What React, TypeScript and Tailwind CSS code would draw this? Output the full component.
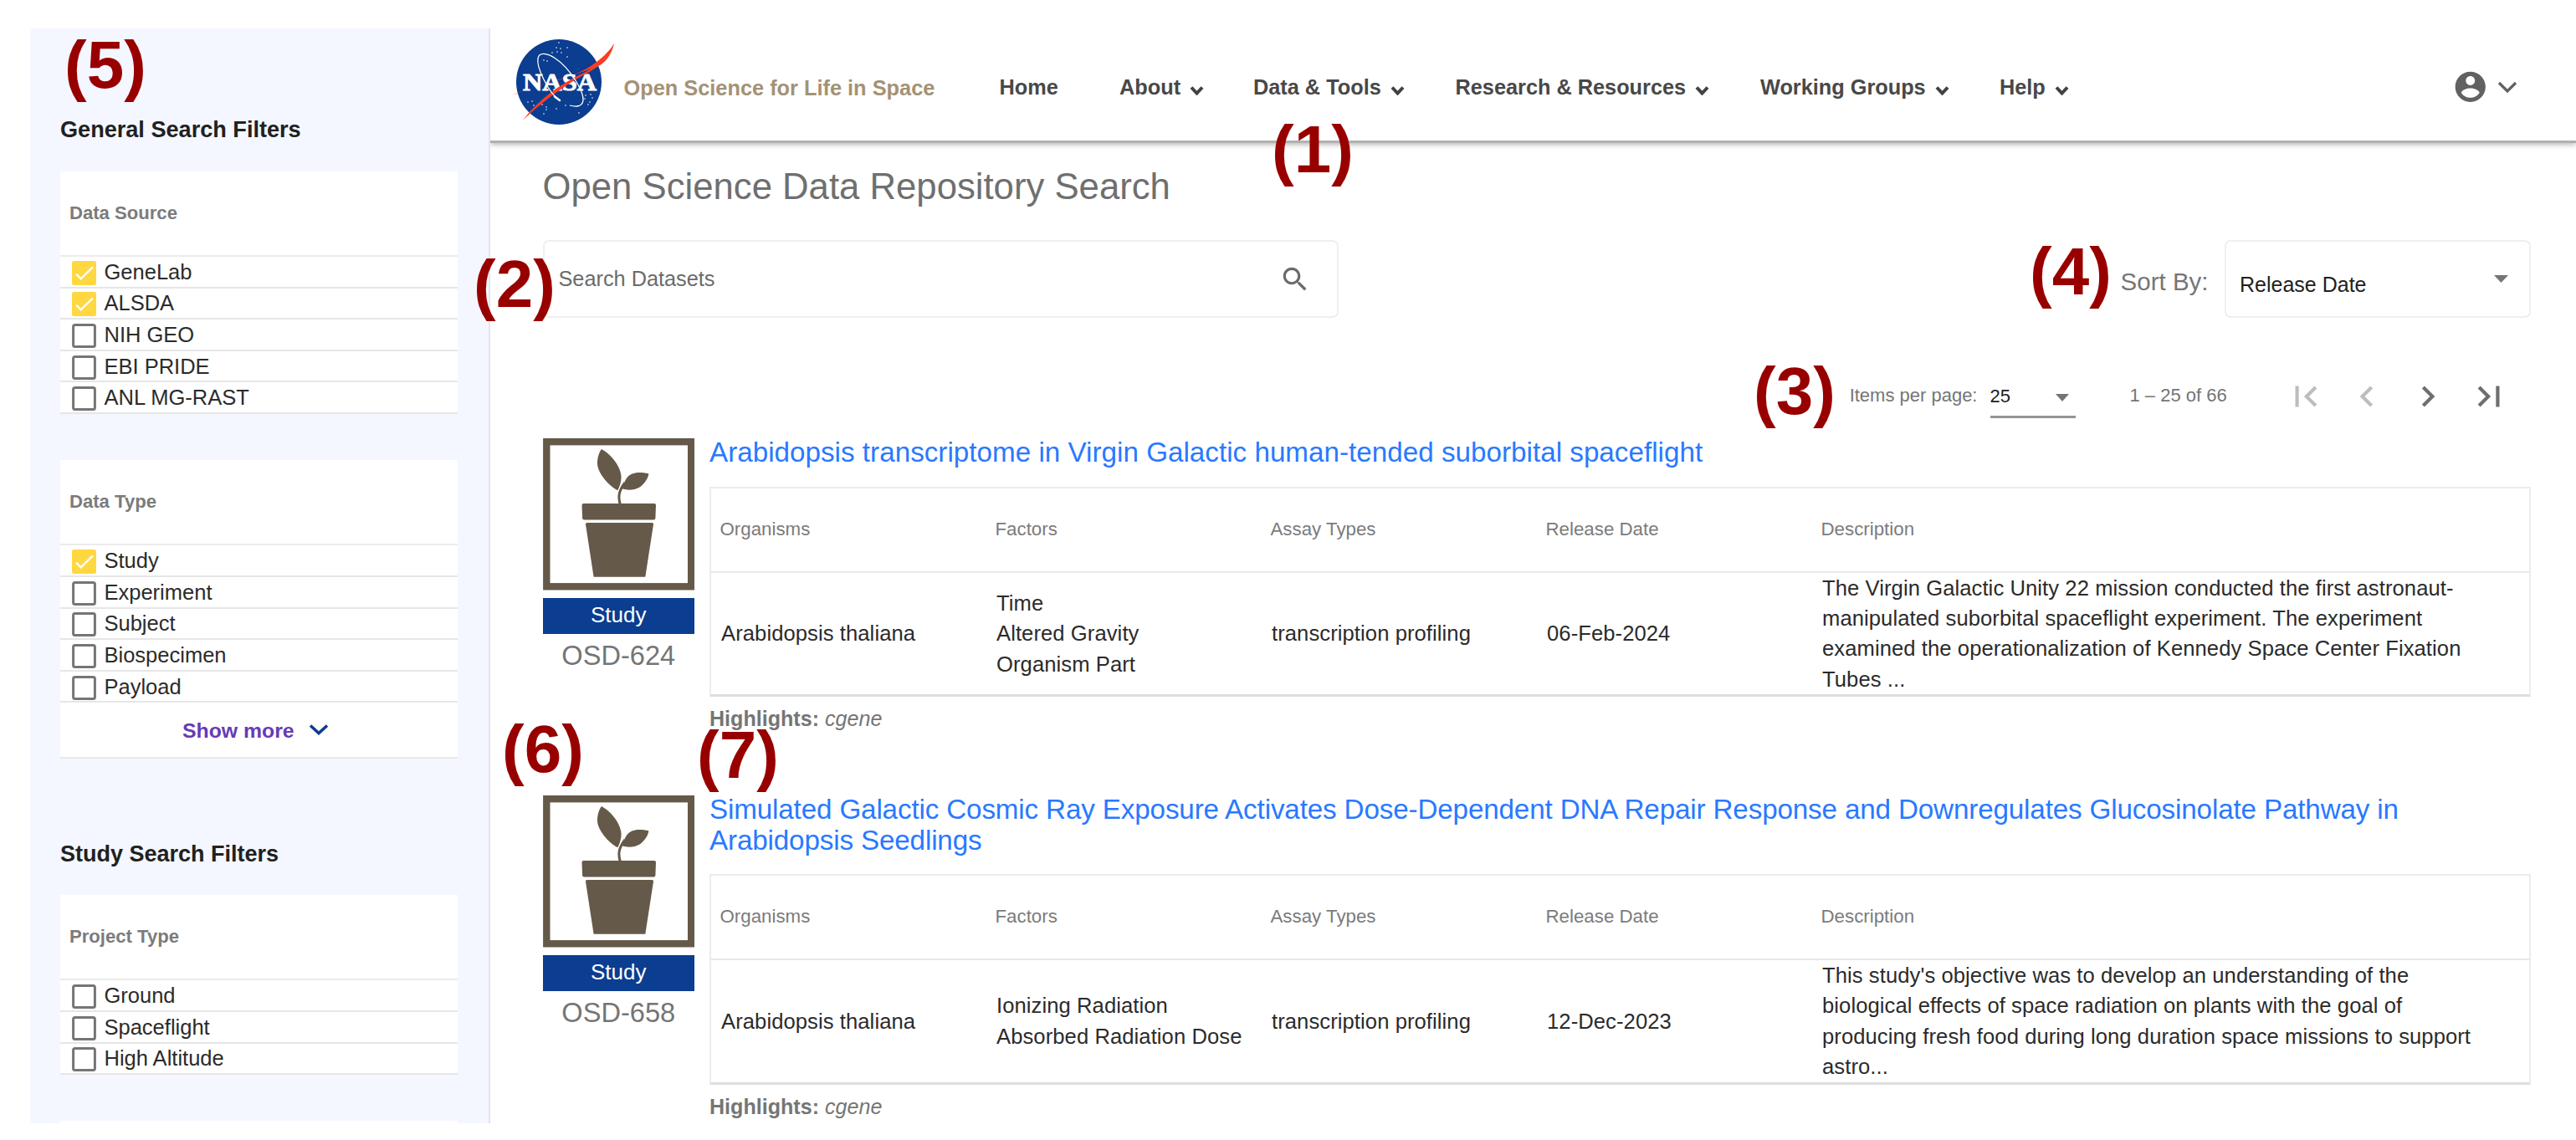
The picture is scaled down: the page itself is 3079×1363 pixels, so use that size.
import React from "react";

const CHEVRON_DOWN = "M2 2.5 L8.5 9.5 L15 2.5";

function NasaLogo() {
  const stars = [
    [68, 21], [65, 27], [70, 28], [78, 27], [71, 33], [66, 32], [60, 33], [78, 38], [50, 42], [54, 43],
    [31, 92], [36, 91], [38, 96], [48, 95], [53, 98], [50, 106], [53, 101], [65, 100], [76, 96],
    [100, 84], [108, 87], [106, 83], [103, 95], [105, 92], [92, 105], [50, 89], [99, 88],
  ];
  return (
    <svg width="138" height="134" viewBox="0 4 138 134" className="ml-[14px] shrink-0" aria-label="NASA">
      <circle cx="68" cy="68" r="51" fill="#0b3d91" />
      {stars.map(([x, y], i) => (
        <circle key={i} cx={x} cy={y} r="0.9" fill="#ffffff" opacity="0.65" />
      ))}
      <path
        d="M11 83.7 C40 72 84 64 106 49 C119 40 128 32 134 22 C131 36 122 48 110 51 C85 60 50 70 11 83.7Z"
        fill="#fc3d21"
      />
      <text
        x="25"
        y="78"
        textLength="88"
        lengthAdjust="spacingAndGlyphs"
        fill="#ffffff"
        stroke="#ffffff"
        strokeWidth="0.9"
        className="font-['Liberation_Serif',serif] text-[29px] font-bold"
      >
        NASA
      </text>
      <path
        d="M134 22 C127 44 112 52 97 60 C70 75 46 94 25 113.7 C42 91 68 71 98 57 C116 48 128 36 134 22Z"
        fill="#fc3d21"
      />
      <path
        d="M68.5 90 C55 80 41 50 43 40 C44 32 54 33 64 40 C82 52 98 80 97 90 C96 98 88 98 81 96"
        fill="none"
        stroke="#ffffff"
        strokeWidth="1.3"
      />
      <path d="M63 85.5 L69 90" stroke="#ffffff" strokeWidth="2.6" strokeLinecap="round" />
    </svg>
  );
}

function PlantIcon() {
  return (
    <svg width="181.5" height="181.5" viewBox="0 0 181.5 181.5" className="block" fill="#655949">
      <rect x="4.3" y="4.2" width="172.9" height="173.1" fill="#ffffff" stroke="#655949" strokeWidth="8.4" />
      <path d="M70 13 C83 20 94 36 93.6 47 C93.4 53 91.5 58 89.3 62.3 C77 56 65 40 65 30 C65 23 67 17 70 13Z" />
      <path d="M126.3 42.3 C114 39.5 105 41 100.5 47 C97.5 51 96.3 55 95 60.6 C103 63 112 61.5 117 57.5 C123 52 126 47 126.3 42.3Z" />
      <path d="M98 53 C90.5 63 89.5 70 92.3 79" fill="none" stroke="#655949" strokeWidth="3" />
      <path d="M48.5 78 H133 Q135 78 135 80 L134.4 95.5 Q134.3 97.5 132.3 97.5 H49.2 Q47.2 97.5 47.1 95.5 L46.5 80 Q46.5 78 48.5 78Z" />
      <path d="M52.5 101 H130.5 Q132.2 101 132 103 L122.3 165.7 H60.6 L51 103 Q50.8 101 52.5 101Z" />
    </svg>
  );
}

function Checkbox({ checked }: { checked?: boolean }) {
  return (
    <svg width="29" height="29" viewBox="0 0 29 29" className="mt-[3px] shrink-0">
      {checked ? (
        <>
          <rect width="29" height="29" rx="2.5" fill="#ffd740" />
          <path d="M5 15.5 L10.6 21.3 L25 7.3" fill="none" stroke="#ffffff" strokeWidth="2.4" />
        </>
      ) : (
        <rect x="1.6" y="1.6" width="25.8" height="25.8" rx="2" fill="#ffffff" stroke="#757575" strokeWidth="3" />
      )}
    </svg>
  );
}

type Option = { label: string; checked?: boolean };

function FilterCard({ title, options, more }: { title: string; options: Option[]; more?: boolean }) {
  return (
    <div className="w-[475px] bg-white">
      <div className="h-[102px] border-b-2 border-[#ebebeb] pl-[11px] text-[22.1px] leading-[100px] font-bold text-[#7b7b7b]">
        {title}
      </div>
      {options.map((o) => (
        <div
          key={o.label}
          className="flex h-[37.6px] items-center gap-[10px] border-b-2 border-[#e6e6e6] pl-[13.5px] text-[25.5px] leading-[30px] text-[#2b2b2b]"
        >
          <Checkbox checked={o.checked} />
          {o.label}
        </div>
      ))}
      {more && (
        <div className="flex h-[67px] items-center border-b-2 border-[#e9e9e9] pt-[1px] pl-[146px] text-[24.8px] font-bold text-[#673ab7]">
          Show more
          <svg width="24" height="16" viewBox="0 0 24 16" className="ml-[17px]">
            <path d="M2 2.5 L12 11.5 L22 2.5" fill="none" stroke="#0b3d91" strokeWidth="3.6" />
          </svg>
        </div>
      )}
    </div>
  );
}

function NavItem({ label, width, menu = true }: { label: string; width: string; menu?: boolean }) {
  return (
    <div className={`flex shrink-0 items-center text-[25.3px] leading-[30px] font-bold whitespace-nowrap text-[#484848] ${width}`}>
      {label}
      {menu && (
        <svg width="17" height="12" viewBox="0 0 17 12" className="mt-[9px] ml-[11px]">
          <path d={CHEVRON_DOWN} fill="none" stroke="#424242" strokeWidth="4" />
        </svg>
      )}
    </div>
  );
}

function PageButton({ d, disabled }: { d: string; disabled?: boolean }) {
  return (
    <svg width="50" height="50" viewBox="0 0 24 24" className="shrink-0" fill={disabled ? "#bdbdbd" : "#6e6e6e"}>
      <path d={d} />
    </svg>
  );
}

type Study = {
  id: string;
  title: string[];
  titleClass: string;
  factors: string[];
  date: string;
  description: string[];
};

function Lines({ lines }: { lines: string[] }) {
  return (
    <div>
      {lines.map((l) => (
        <div key={l} className="whitespace-nowrap">
          {l}
        </div>
      ))}
    </div>
  );
}

function Result({ study }: { study: Study }) {
  return (
    <div className="flex h-[427px] shrink-0 gap-[18px]">
      <div className="w-[181.5px] shrink-0 text-center">
        <PlantIcon />
        <div className="mt-[9px] h-[43px] bg-[#0b3d91] text-[26px] leading-[41px] text-white">Study</div>
        <div className="mt-[6px] text-[32.6px] leading-[40px] text-[#757575]">{study.id}</div>
      </div>
      <div className="-mt-[1px] flex-1">
        <h2 className={`text-[33.2px] leading-[36.5px] text-[#2979ff] ${study.titleClass}`}>
          <Lines lines={study.title} />
        </h2>
        <div className="mt-[22px] border-2 border-b-[3px] border-[#ececec] border-b-[#dedede]">
          <div className="grid h-[101px] grid-cols-[329px_329px_329px_329px_1fr] border-b-2 border-[#e8e8e8] pl-[10.5px] text-[22.3px] leading-[97px] text-[#7b7b7b]">
            <div>Organisms</div>
            <div>Factors</div>
            <div>Assay Types</div>
            <div>Release Date</div>
            <div>Description</div>
          </div>
          <div className="grid h-[145.6px] grid-cols-[329px_329px_329px_329px_1fr] items-center pl-[12px] text-[25.6px] leading-[36.4px] tracking-[0.08px] text-[#2b2b2b]">
            <div>Arabidopsis thaliana</div>
            <Lines lines={study.factors} />
            <div>transcription profiling</div>
            <div>{study.date}</div>
            <Lines lines={study.description} />
          </div>
        </div>
        <div className="mt-[8px] text-[25.1px] leading-[36px] text-[#757575]">
          <b>Highlights:</b> <i>cgene</i>
        </div>
      </div>
    </div>
  );
}

const STUDIES: Study[] = [
  {
    id: "OSD-624",
    title: ["Arabidopsis transcriptome in Virgin Galactic human-tended suborbital spaceflight"],
    titleClass: "tracking-[0.02px]",
    factors: ["Time", "Altered Gravity", "Organism Part"],
    date: "06-Feb-2024",
    description: [
      "The Virgin Galactic Unity 22 mission conducted the first astronaut-",
      "manipulated suborbital spaceflight experiment. The experiment",
      "examined the operationalization of Kennedy Space Center Fixation",
      "Tubes ...",
    ],
  },
  {
    id: "OSD-658",
    title: [
      "Simulated Galactic Cosmic Ray Exposure Activates Dose-Dependent DNA Repair Response and Downregulates Glucosinolate Pathway in",
      "Arabidopsis Seedlings",
    ],
    titleClass: "tracking-[-0.14px]",
    factors: ["Ionizing Radiation", "Absorbed Radiation Dose"],
    date: "12-Dec-2023",
    description: [
      "This study's objective was to develop an understanding of the",
      "biological effects of space radiation on plants with the goal of",
      "producing fresh food during long duration space missions to support",
      "astro...",
    ],
  },
];

const MARKERS = [
  { label: "(1)", place: "left-[1520px] top-[139px]" },
  { label: "(2)", place: "left-[566px] top-[300px]" },
  { label: "(3)", place: "left-[2096px] top-[428px]" },
  { label: "(4)", place: "left-[2426px] top-[285px]" },
  { label: "(5)", place: "left-[77px] top-[38px]" },
  { label: "(6)", place: "left-[600px] top-[856px]" },
  { label: "(7)", place: "left-[833px] top-[863px]" },
];

export default function App() {
  return (
    <div className="relative flex h-[1363px] w-[3079px] items-start overflow-hidden bg-white pt-[34px] pl-[36px] font-['Liberation_Sans',Arial,sans-serif]">
      <aside className="h-[1309px] w-[550px] shrink-0 overflow-hidden border-r-2 border-[#e2e5ee] bg-[#f4f7ff] pl-[36px]">
        <h3 className="h-[171px] pt-[104px] text-[27.1px] leading-[34px] font-bold text-[#212121]">General Search Filters</h3>
        <FilterCard
          title="Data Source"
          options={[
            { label: "GeneLab", checked: true },
            { label: "ALSDA", checked: true },
            { label: "NIH GEO" },
            { label: "EBI PRIDE" },
            { label: "ANL MG-RAST" },
          ]}
        />
        <div className="h-[55.5px]" />
        <FilterCard
          title="Data Type"
          more
          options={[
            { label: "Study", checked: true },
            { label: "Experiment" },
            { label: "Subject" },
            { label: "Biospecimen" },
            { label: "Payload" },
          ]}
        />
        <h3 className="h-[163px] pt-[97px] text-[27px] leading-[34px] font-bold text-[#212121]">Study Search Filters</h3>
        <FilterCard
          title="Project Type"
          options={[{ label: "Ground" }, { label: "Spaceflight" }, { label: "High Altitude" }]}
        />
        <div className="mt-[55px] h-[20px] w-[475px] bg-white" />
      </aside>

      <main className="flex h-[1309px] min-w-0 flex-1 flex-col overflow-hidden">
        <header className="flex h-[137px] shrink-0 items-center border-b-[3px] border-[#b1b1b1] shadow-[0_2px_6px_rgba(0,0,0,0.28)]">
          <NasaLogo />
          <div className="mt-[8px] ml-[7.5px] w-[449px] shrink-0 text-[25.35px] leading-[30px] font-bold whitespace-nowrap text-[#a39275]">
            Open Science for Life in Space
          </div>
          <div className="mt-[5px] flex flex-1 items-center">
            <NavItem label="Home" width="w-[143.5px]" menu={false} />
            <NavItem label="About" width="w-[160px]" />
            <NavItem label="Data & Tools" width="w-[241.5px]" />
            <NavItem label="Research & Resources" width="w-[364.5px]" />
            <NavItem label="Working Groups" width="w-[286px]" />
            <NavItem label="Help" width="w-[541px]" />
            <svg width="43.5" height="43.5" viewBox="0 0 24 24" className="shrink-0" fill="#616161">
              <path d="M12 2C6.48 2 2 6.48 2 12s4.48 10 10 10 10-4.48 10-10S17.52 2 12 2zm0 3c1.66 0 3 1.34 3 3s-1.34 3-3 3-3-1.34-3-3 1.34-3 3-3zm0 14.2c-2.5 0-4.71-1.28-6-3.22.03-1.99 4-3.08 6-3.08 1.99 0 5.97 1.09 6 3.08-1.29 1.94-3.5 3.22-6 3.22z" />
            </svg>
            <svg width="24" height="16" viewBox="0 0 24 16" className="ml-[10px] shrink-0">
              <path d="M2 3 L12 13 L22 3" fill="none" stroke="#616161" strokeWidth="3.2" />
            </svg>
          </div>
        </header>

        <div className="flex flex-col pr-[54.5px] pl-[62.5px]">
          <h1 className="mt-[27px] text-[43.7px] leading-[50px] text-[#6f6f6f]">Open Science Data Repository Search</h1>

          <div className="mt-[39px] flex h-[93px] shrink-0 items-center">
            <div className="flex h-[93px] w-[951px] items-center justify-between rounded-[7px] border-2 border-[#efefef] pr-[31px] pl-[17px] text-[25.3px] text-[#6b6b6b]">
              Search Datasets
              <svg width="38" height="38" viewBox="0 0 24 24" fill="#6b6b6b">
                <path d="M15.5 14h-.79l-.28-.27C15.41 12.59 16 11.11 16 9.5 16 5.91 13.09 3 9.5 3S3 5.91 3 9.5 5.91 16 9.5 16c1.61 0 3.09-.59 4.23-1.57l.27.28v.79l5 4.99L20.49 19l-4.99-5zm-6 0C7.01 14 5 11.99 5 9.5S7.01 5 9.5 5 14 7.01 14 9.5 11.99 14 9.5 14z" />
              </svg>
            </div>
            <div className="mt-[7px] mr-[19px] ml-auto text-[29.5px] text-[#757575]">Sort By:</div>
            <div className="flex h-[93px] w-[366px] items-center justify-between rounded-[7px] border-2 border-[#efefef] pr-[25px] pl-[16.5px] text-[25px] text-[#212121]">
              <span className="mt-[14px]">Release Date</span>
              <svg width="17" height="9" viewBox="0 0 17 9">
                <path d="M0 0 H17 L8.5 9Z" fill="#757575" />
              </svg>
            </div>
          </div>

          <div className="mt-[69px] flex h-[50px] shrink-0 items-center justify-end text-[22px] leading-[30px] text-[#757575]">
            <span className="mt-[-3px] mr-[15px]">Items per page:</span>
            <div className="mt-[4px] flex h-[48px] w-[102px] items-start justify-between border-b-[3px] border-[#949494] pt-[7px] pr-[8px] text-[#212121]">
              25
              <svg width="16" height="9" viewBox="0 0 16 9" className="mt-[12px]">
                <path d="M0 0 H16 L8 9Z" fill="#757575" />
              </svg>
            </div>
            <span className="mt-[-3px] ml-[65px] w-[185px]">1 – 25 of 66</span>
            <div className="mr-[25px] flex gap-[23px]">
              <PageButton disabled d="M18.41 16.59L13.82 12l4.59-4.59L17 6l-6 6 6 6zM6 6h2v12H6z" />
              <PageButton disabled d="M15.41 7.41L14 6l-6 6 6 6 1.41-1.41L10.83 12z" />
              <PageButton d="M10 6L8.59 7.41 13.17 12l-4.58 4.59L10 18l6-6z" />
              <PageButton d="M5.59 7.41L10.18 12l-4.59 4.59L7 18l6-6-6-6zM16 6h2v12h-2z" />
            </div>
          </div>

          <div className="mt-[25px]">
            {STUDIES.map((s) => (
              <Result key={s.id} study={s} />
            ))}
          </div>
        </div>
      </main>

      {MARKERS.map((m) => (
        <div key={m.label} className={`absolute text-[80px] leading-[80px] font-bold text-[#980000] ${m.place}`}>
          {m.label}
        </div>
      ))}
    </div>
  );
}
